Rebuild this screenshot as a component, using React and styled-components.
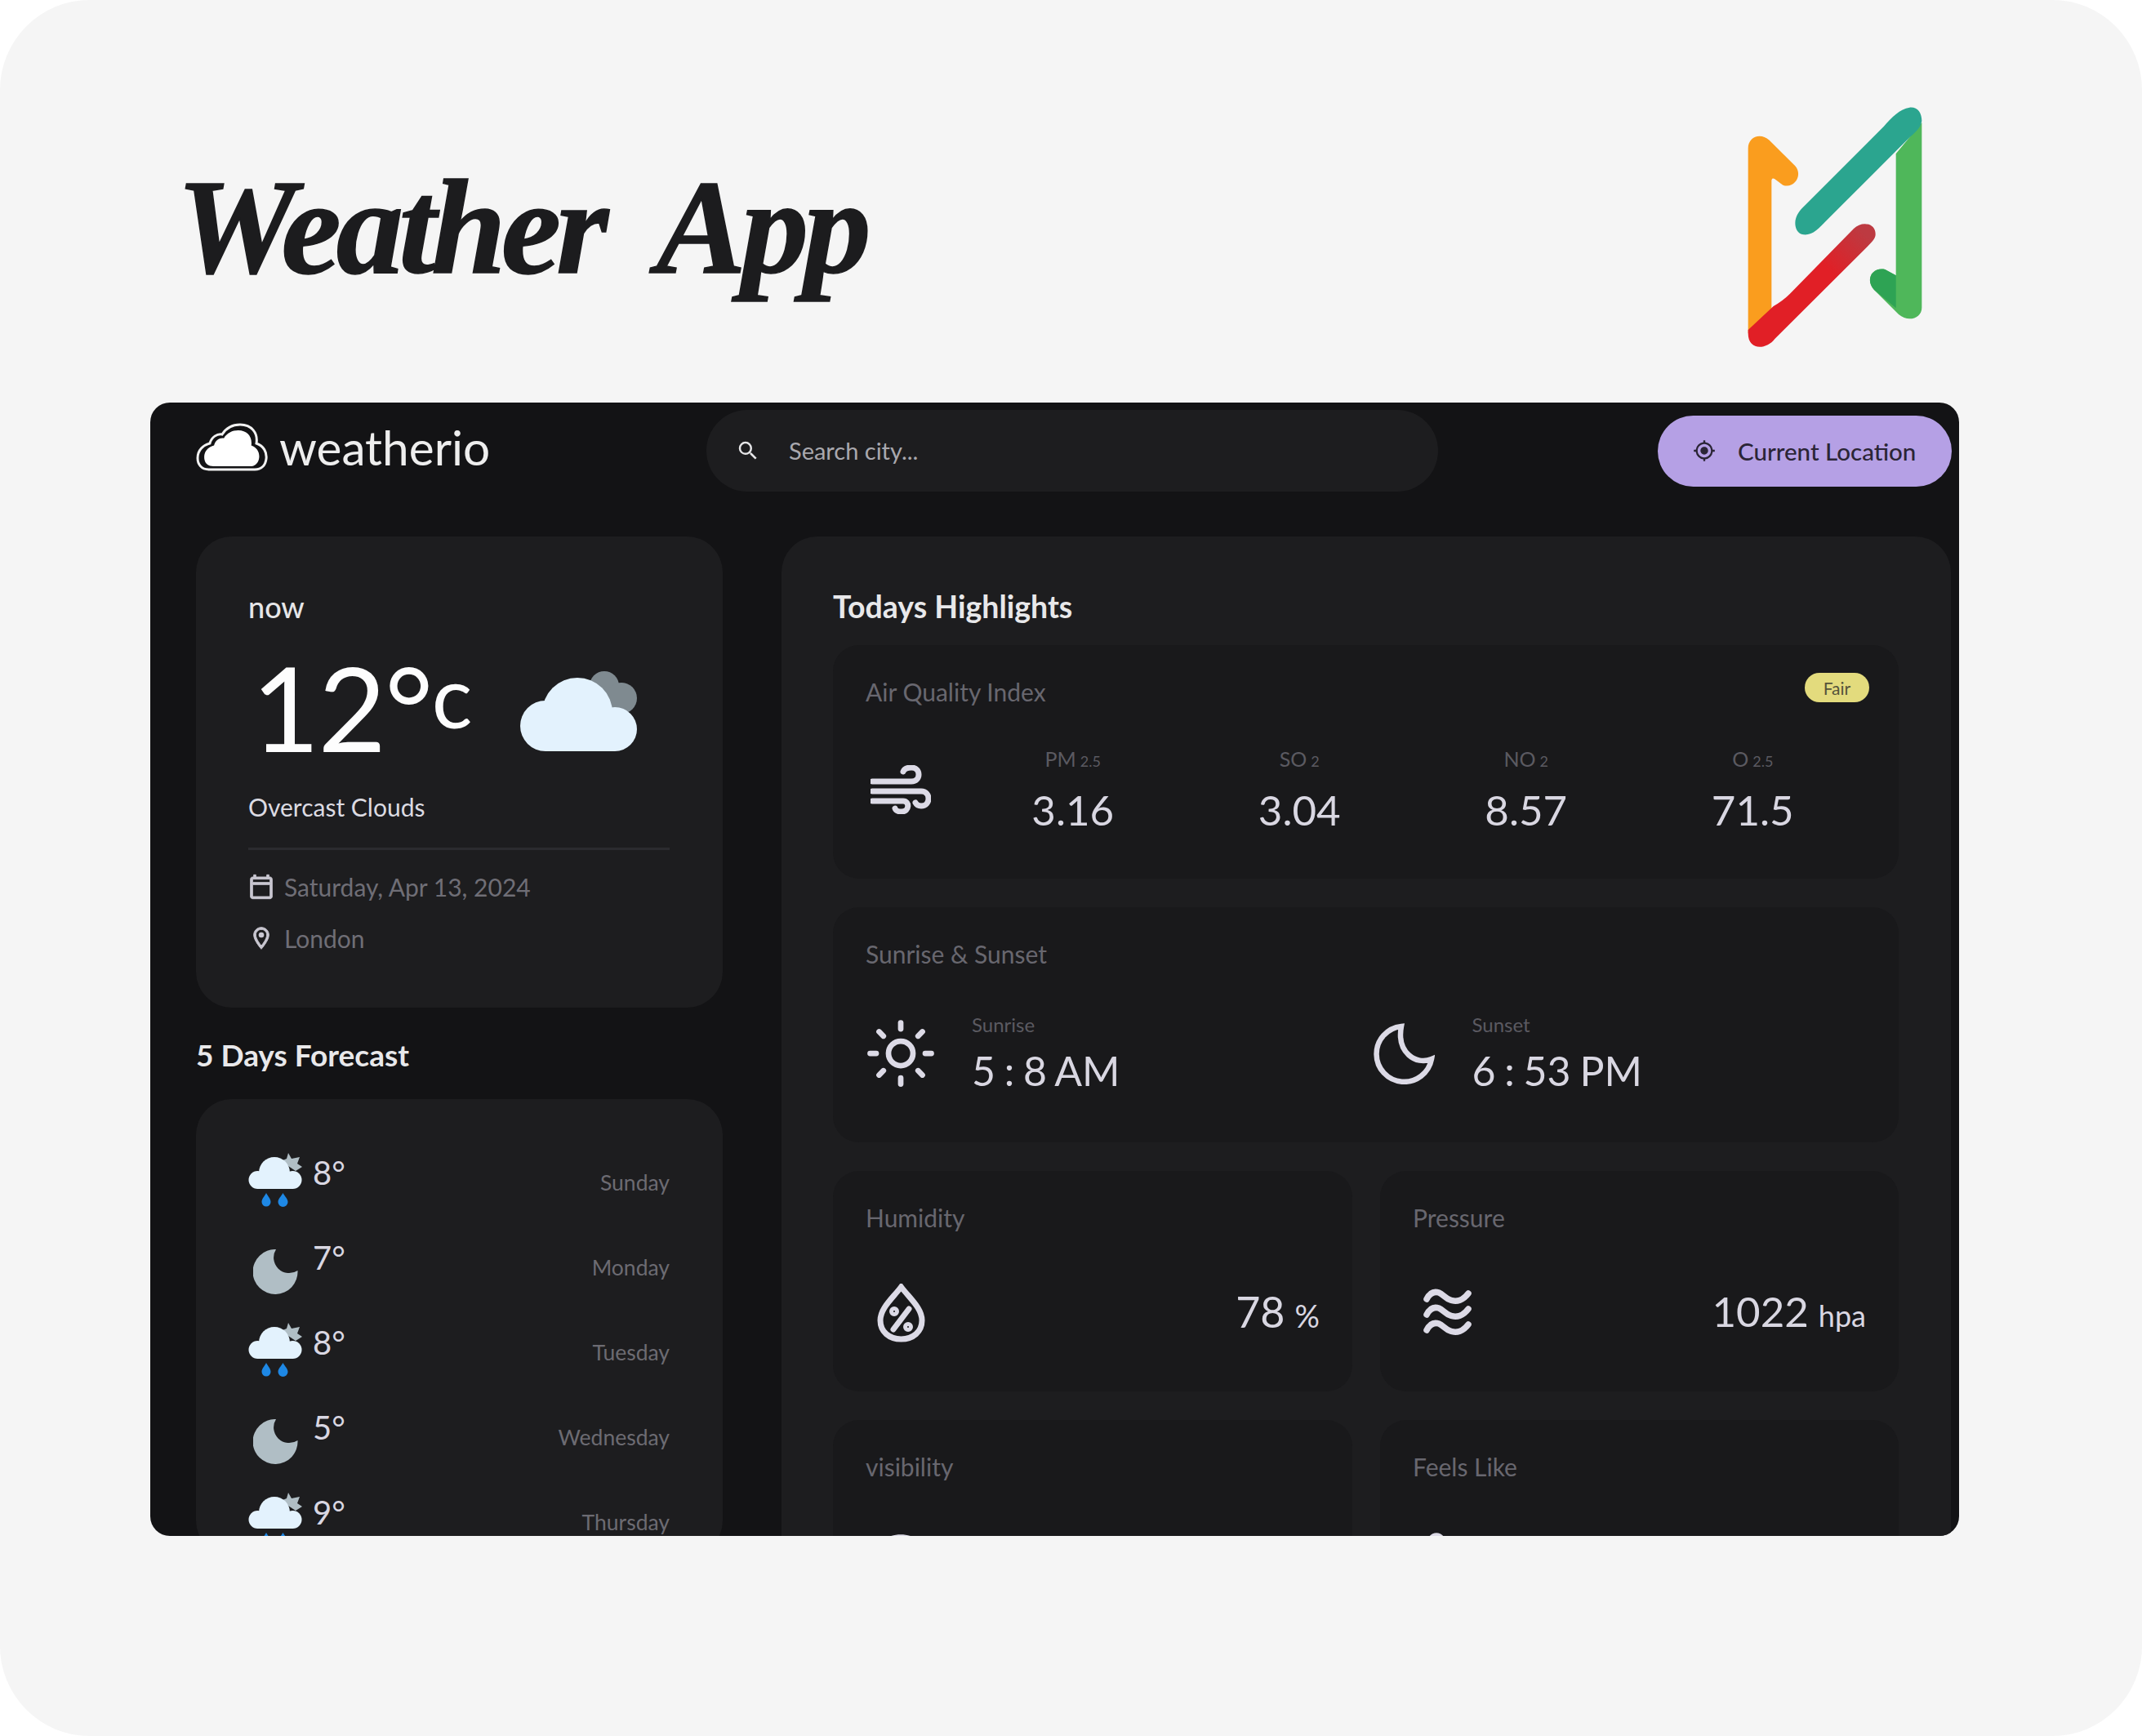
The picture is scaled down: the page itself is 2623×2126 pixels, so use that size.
import React from "react";
import styled, { createGlobalStyle } from "styled-components";
import { MdSearch, MdOutlineCalendarToday, MdOutlineLocationOn, MdOutlineMyLocation, MdOutlineVisibility, MdOutlineThermostat } from "react-icons/md";
import { Sun } from "lucide-react";

const Global = createGlobalStyle`
  html, body { margin: 0; padding: 0; background: #ffffff; }
  * { box-sizing: border-box; }
`;

const Page = styled.div`
  width: 2623px; height: 2126px; background: #f5f5f5; border-radius: 110px;
  padding: 0 173px 0 184px; display: flex; flex-direction: column; overflow: hidden;
  font-family: "Lato", "Noto Sans", sans-serif;
`;
const Hero = styled.header`
  height: 493px; display: flex; justify-content: space-between; align-items: flex-start;
  padding-top: 100px;
`;
const Title = styled.h1`
  margin: 96px 0 0 32px; font-family: "Liberation Serif", serif; font-style: italic; font-weight: 700;
  font-size: 165px; line-height: 165px; color: #1c1c1e; white-space: pre; letter-spacing: -6px;
  -webkit-text-stroke: 1.5px #1c1c1e;
`;
const LogoMark = styled.svg`width: 400px; height: 350px; display: block; flex: none;`;
const Panel = styled.section`
  width: 2215px; height: 1388px; background: #131315; border-radius: 24px; overflow: hidden; flex: none;
`;
const TopBar = styled.div`height: 118px; display: flex; align-items: center; padding: 0 9px 0 56px;`;
const Brand = styled.div`width: 625px; display: flex; align-items: center; gap: 14px; margin-top: -10px;`;
const BrandName = styled.span`font-size: 58.5px; line-height: 70px; color: #eeeeee; font-weight: 400;`;
const Search = styled.div`
  width: 896px; height: 100px; border-radius: 50px; background: #1d1d1f; display: flex; align-items: center;
  padding-left: 36px; gap: 33px; color: #e6e6e8; font-size: 30px;
`;
const SearchInput = styled.input`
  flex: 1; border: 0; outline: 0; background: transparent; font: 400 29px "Lato", sans-serif; color: #a9a8ae;
  position: relative; top: -1px;
  &::placeholder { color: #a9a8ae; opacity: 1; }
`;
const LocationButton = styled.button`
  margin-left: auto; width: 360px; height: 87px; border: 0; border-radius: 44px; background: #b5a0e5;
  display: flex; align-items: center; padding-left: 43px; gap: 27px; color: #2b2536;
  font: 500 29.5px "Lato", sans-serif; white-space: nowrap;
`;
const Main = styled.div`
  display: grid; grid-template-columns: 645px 1432px; gap: 72px; padding: 46px 0 0 56px;
`;
const Card = styled.div`background: #1d1d1f; border-radius: 44px;`;
const NowCard = styled(Card)`height: 577px; padding: 62px 65px 0 64px;`;
const NowLabel = styled.div`font-size: 36px; line-height: 48px; color: #e6e6e8; font-weight: 500;`;
const TempRow = styled.div`margin-top: 34px; height: 130px; display: flex; align-items: flex-start; padding-left: 4px;`;
const TempValue = styled.div`
  font-size: 144px; line-height: 130px; color: #fdfdfd; font-weight: 400; white-space: nowrap; width: 328px;
  letter-spacing: -2px;
`;
const TempUnit = styled.span`font-size: 104px; letter-spacing: 0; position: relative; top: -29px;`;
const Condition = styled.div`margin-top: 33px; font-size: 30px; line-height: 48px; color: #dcdbe2;`;
const Divider = styled.hr`margin: 26px 0 0; border: 0; height: 3px; background: #2b2b2f;`;
const MetaRow = styled.div`
  margin-top: ${p => p.$top}px; height: 40px; display: flex; align-items: center; gap: 12px;
  font-size: 30px; color: #6f6e76;
  svg { width: 32px; height: 32px; color: #c9c7d1; flex: none; }
  svg path:not([fill="none"]) { stroke: currentColor; stroke-width: 0.7px; }
`;
const SectionTitle = styled.h2`
  margin: ${p => p.$top}px 0 0; font-size: ${p => p.$size}px; line-height: 48px; font-weight: 700; color: #e8e8ea;
`;
const ForecastCard = styled(Card)`margin-top: 30px; height: 560px; padding: 66px 65px 0 64px;`;
const ForecastRow = styled.div`height: 104px; display: flex; align-items: flex-start;`;
const IconSlot = styled.div`width: 66px; height: 66px; display: flex; justify-content: center; align-items: flex-start; padding-top: ${p => p.$pad}px; flex: none;`;
const DayTemp = styled.div`margin-left: 13px; font-size: 40px; line-height: 48px; color: #d9d7e2;`;
const DayName = styled.div`margin: 18px 0 0 auto; font-size: 26.5px; line-height: 36px; color: #6c6b72;`;
const HighlightsPanel = styled(Card)`height: 1400px; padding: 62px 64px 0 63px;`;
const HighlightsGrid = styled.div`
  margin-top: 23px; display: grid; grid-template-columns: 636px 635px; gap: 35px 34px; grid-auto-rows: min-content;
`;
const InnerCard = styled.div`
  background: #19191b; border-radius: 32px; padding: 37px 40px 0; height: ${p => p.$h}px;
  grid-column: ${p => p.$wide ? "1 / -1" : "auto"};
`;
const CardHead = styled.div`display: flex; justify-content: space-between; align-items: flex-start;`;
const CardTitle = styled.div`font-size: 30px; line-height: 40px; color: #68676f;`;
const Badge = styled.span`
  margin: -3px -4px 0 0; width: 79px; height: 36px; border-radius: 18px; background: #e3db7d; color: #55533a;
  font-size: 21px; display: flex; align-items: center; justify-content: center;
`;
const AirGrid = styled.div`margin-top: 44px; display: grid; grid-template-columns: 115px repeat(4, 1fr); align-items: center;`;
const AirCell = styled.div`text-align: center;`;
const AirLabel = styled.div`font-size: 25px; line-height: 36px; color: #5b5a61;`;
const AirSub = styled.span`font-size: 18px; margin-left: 5px;`;
const BigValue = styled.div`font-size: 51px; line-height: 60px; color: #d9d7e2; white-space: pre;`;
const AirValue = styled(BigValue)`margin-top: 12px;`;
const SunGrid = styled.div`margin-top: 51px; display: grid; grid-template-columns: 1fr 1fr;`;
const SunItem = styled.div`display: flex; align-items: center;`;
const SunIconBox = styled.div`width: ${p => p.$w}px; display: flex; color: #dcdae6; margin-left: ${p => p.$left}px; flex: none;`;
const SunLabel = styled.div`font-size: 24px; line-height: 32px; color: #5b5a61;`;
const SunValue = styled(BigValue)`margin-top: 10px; font-size: 50px; word-spacing: -2px;`;
const StatRow = styled.div`margin-top: 57px; height: 80px; display: flex; align-items: center; justify-content: space-between; padding-left: ${p => p.$pad}px; color: #dcdae6;`;
const ClippedIcon = styled.div`display: flex; align-self: flex-start; margin: ${p => p.$up}px 0 0 ${p => p.$left}px;`;
const StatValue = styled.div`font-size: 51px; line-height: 60px; color: #d9d7e2; white-space: nowrap;`;
const StatUnit = styled.span`font-size: ${p => p.$size}px; margin-left: 12px;`;
const PercentValue = styled(StatValue)`font-size: 52px;`;

const BigCloud = () => (
  <svg width="144" height="98" viewBox="0 0 144 98" style={{ flex: "none", marginTop: 21 }}>
    <g fill="#7f8a90"><circle cx="104" cy="18" r="18" /><circle cx="125" cy="33" r="19" /></g>
    <g fill="#e3f2fd"><circle cx="32" cy="67" r="31" /><circle cx="71" cy="51" r="43" /><circle cx="117" cy="71" r="27" /><rect x="32" y="60" width="85" height="38" /></g>
  </svg>
);
const RainIcon = () => (
  <svg width="66" height="66" viewBox="0 0 66 66">
    <polygon fill="#b0bec5" points="49,0 53,7 63,5 60,13 66,17 58,22 40,10 47,7" />
    <g fill="#e3f2fd"><circle cx="11.5" cy="33" r="11" /><circle cx="32" cy="24" r="19" /><circle cx="54.5" cy="33" r="11" /><rect x="11" y="24" width="44" height="20" /></g>
    <g fill="#1e88e5">
      <path d="M22 49c2 4 5.500 7 5.500 11a5.500 5.500 0 0 1-11 0c0-4 3.500-7 5.500-11z" />
      <path d="M42.500 49c2 4 6 7 6 11a6 6 0 0 1-12 0c0-4 4-7 6-11z" />
    </g>
  </svg>
);
const MoonFill = () => (
  <svg width="55" height="55" viewBox="0 0 55 55"><path fill="#b0bec5" d="M28 0A27.500 27.500 0 1 0 54.500 26A19 19 0 0 1 28 0Z" /></svg>
);
const BrandCloud = () => {
  const d = "M16 57C6 57 2 50 2 43C2 33 9 27 17 25C19 17 26 13 32 14C37 6 45 2 54 2C68 2 76 12 74 25C83 28 87 36 86 44C85 52 80 57 72 57Z";
  return (
    <svg width="88" height="59" viewBox="0 0 88 59" style={{ flex: "none" }}>
      <path d={d} fill="none" stroke="#f2f2f2" strokeWidth="3" />
      <path d={d} fill="#ffffff" transform="translate(8.500 7.500) scale(.8)" />
    </svg>
  );
};
const WindIcon = () => (
  <svg width="74" height="60" viewBox="0 0 74 60" fill="none" stroke="#dcdae6" strokeWidth="7" strokeLinecap="round" style={{ marginLeft: 6 }}>
    <path d="M2 20H50C62 20 62 3 50 3C45 3 41 5 40 8" />
    <path d="M2 32H62C74 32 74 50 62 50C58 50 56 48 55 46" />
    <path d="M2 44H40C48 44 48 57 38 57C34 57 31 56 30 53" />
  </svg>
);
const NightMoon = () => (
  <svg width="75" height="75" viewBox="0 0 75 75" fill="none" stroke="#dcdae6" strokeWidth="6.500" strokeLinejoin="miter">
    <path d="M34 4A34 34 0 1 0 71 44C52 52 28 36 34 4Z" />
  </svg>
);
const HumidityIcon = () => (
  <svg width="59" height="72" viewBox="0 0 59 72" fill="none" stroke="#dcdae6" strokeWidth="7" strokeLinecap="round">
    <path d="M29.500 4C40 18 55 30 55 45C55 59 44 68 29.500 68C15 68 4 59 4 45C4 30 19 18 29.500 4Z" />
    <path d="M39 31L20 56" />
    <circle cx="21" cy="34" r="3.500" strokeWidth="5" />
    <circle cx="38" cy="53" r="3.500" strokeWidth="5" />
  </svg>
);
const WavesIcon = () => (
  <svg width="61" height="60" viewBox="0 0 61 60" fill="none" stroke="#dcdae6" strokeWidth="7.500" strokeLinecap="round" strokeLinejoin="round">
    <path d="M5 13C9 5 14 3 20 5C25 7 28 12 34 14C42 17 50 14 56 6" />
    <path d="M5 32C9 24 14 22 20 24C25 26 28 31 34 33C42 36 50 33 56 25" />
    <path d="M5 51C9 43 14 41 20 43C25 45 28 50 34 52C42 55 50 52 56 44" />
  </svg>
);

const air = [
  ["PM", "2.5", "3.16"],
  ["SO", "2", "3.04"],
  ["NO", "2", "8.57"],
  ["O", "2.5", "71.5"],
];
const days = [
  ["8°", "Sunday", true],
  ["7°", "Monday", false],
  ["8°", "Tuesday", true],
  ["5°", "Wednesday", false],
  ["9°", "Thursday", true],
];

export default function App() {
  return (
    <Page>
      <Global />
      <Hero>
        <Title>{"Weather  App"}</Title>
        <LogoMark viewBox="0 0 1200 1050" role="img" aria-label="logo">
          <defs>
            <linearGradient id="redGrad" x1="315" y1="935" x2="700" y2="560" gradientUnits="userSpaceOnUse">
              <stop offset="0.65" stopColor="#e11f26" /><stop offset="1" stopColor="#bd3a41" />
            </linearGradient>
          </defs>
          <path fill="#fa9d1e" d="M272 925V245C272 205 315 185 350 215L445 310C475 345 440 395 400 380L370 358C362 352 358 356 358 365V840Z" />
          <path fill="#4fb75a" d="M910 150V830C910 870 860 885 825 855L735 765C700 725 730 680 775 690L815 712V265Z" />
          <path fill="#2ea354" d="M815 712V832L735 765C700 725 730 680 775 690Z" />
          <path fill="#2ba58f" d="M445 520C445 490 465 470 480 455L770 165C800 130 830 100 865 95C895 92 910 115 910 145C905 175 880 190 860 210L560 510C530 540 510 565 475 562C455 560 445 540 445 520Z" />
          <path fill="url(#redGrad)" d="M272 912L365 825Q400 805 425 780L660 540C690 510 740 520 740 560C740 575 730 585 718 598L370 945C340 985 272 990 272 925Z" />
        </LogoMark>
      </Hero>
      <Panel>
        <TopBar>
          <Brand><BrandCloud /><BrandName>weatherio</BrandName></Brand>
          <Search><MdSearch size={30} /><SearchInput placeholder="Search city..." readOnly /></Search>
          <LocationButton><MdOutlineMyLocation size={28} />Current Location</LocationButton>
        </TopBar>
        <Main>
          <div>
            <NowCard>
              <NowLabel>now</NowLabel>
              <TempRow>
                <TempValue>12°<TempUnit>c</TempUnit></TempValue>
                <BigCloud />
              </TempRow>
              <Condition>Overcast Clouds</Condition>
              <Divider />
              <MetaRow $top={25}><MdOutlineCalendarToday />Saturday, Apr 13, 2024</MetaRow>
              <MetaRow $top={23}><MdOutlineLocationOn />London</MetaRow>
            </NowCard>
            <SectionTitle $top={34} $size={37}>5 Days Forecast</SectionTitle>
            <ForecastCard>
              {days.map(([t, d, rain]) => (
                <ForecastRow key={d}>
                  <IconSlot $pad={rain ? 0 : 14}>{rain ? <RainIcon /> : <MoonFill />}</IconSlot>
                  <DayTemp>{t}</DayTemp>
                  <DayName>{d}</DayName>
                </ForecastRow>
              ))}
            </ForecastCard>
          </div>
          <HighlightsPanel>
            <SectionTitle $top={0} $size={37.5}>Todays Highlights</SectionTitle>
            <HighlightsGrid>
              <InnerCard $wide $h={286}>
                <CardHead><CardTitle>Air Quality Index</CardTitle><Badge>Fair</Badge></CardHead>
                <AirGrid>
                  <WindIcon />
                  {air.map(([a, b, v]) => (
                    <AirCell key={a}>
                      <AirLabel>{a}<AirSub>{b}</AirSub></AirLabel>
                      <AirValue>{v}</AirValue>
                    </AirCell>
                  ))}
                </AirGrid>
              </InnerCard>
              <InnerCard $wide $h={288}>
                <CardTitle>Sunrise &amp; Sunset</CardTitle>
                <SunGrid>
                  <SunItem>
                    <SunIconBox $w={132} $left={-2}><Sun size={90} strokeWidth={1.8} /></SunIconBox>
                    <div><SunLabel>Sunrise</SunLabel><SunValue>5 : 8 AM</SunValue></div>
                  </SunItem>
                  <SunItem>
                    <SunIconBox $w={121} $left={9}><NightMoon /></SunIconBox>
                    <div><SunLabel>Sunset</SunLabel><SunValue>6 : 53 PM</SunValue></div>
                  </SunItem>
                </SunGrid>
              </InnerCard>
              <InnerCard $h={270}>
                <CardTitle>Humidity</CardTitle>
                <StatRow $pad={14}><HumidityIcon /><PercentValue>78<StatUnit $size={38}>%</StatUnit></PercentValue></StatRow>
              </InnerCard>
              <InnerCard $h={270}>
                <CardTitle>Pressure</CardTitle>
                <StatRow $pad={12}><WavesIcon /><StatValue>1022<StatUnit $size={36}>hpa</StatUnit></StatValue></StatRow>
              </InnerCard>
              <InnerCard $h={270}>
                <CardTitle>visibility</CardTitle>
                <StatRow $pad={0}><ClippedIcon $up={-8} $left={0}><MdOutlineVisibility size={86} /></ClippedIcon></StatRow>
              </InnerCard>
              <InnerCard $h={270}>
                <CardTitle>Feels Like</CardTitle>
                <StatRow $pad={0}><ClippedIcon $up={-3} $left={-14}><MdOutlineThermostat size={86} /></ClippedIcon></StatRow>
              </InnerCard>
            </HighlightsGrid>
          </HighlightsPanel>
        </Main>
      </Panel>
    </Page>
  );
}
